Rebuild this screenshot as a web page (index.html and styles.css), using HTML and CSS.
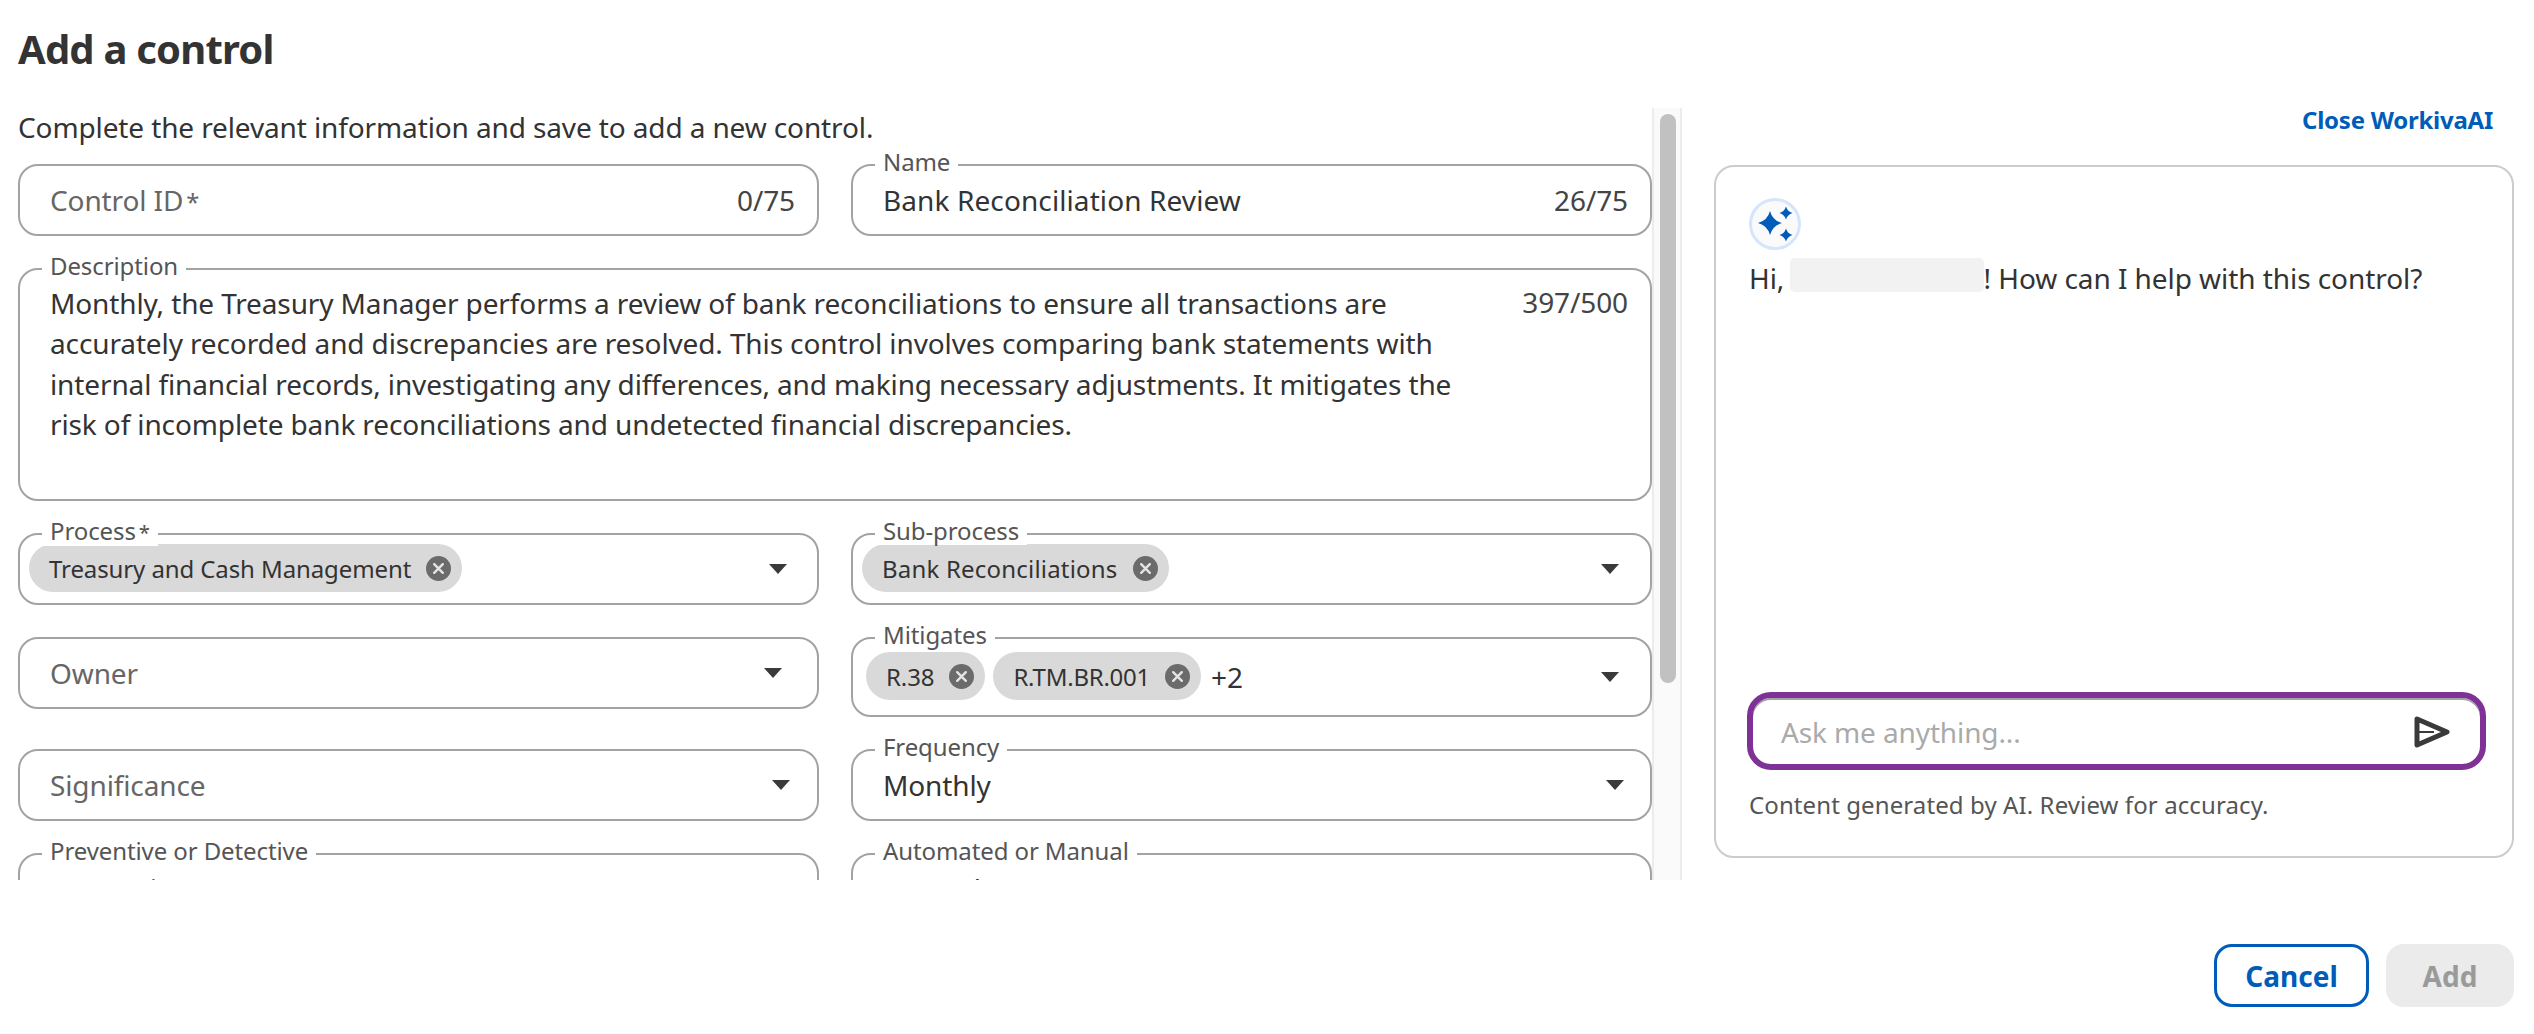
FILE: index.html
```html
<!DOCTYPE html>
<html lang="en">
<head>
<meta charset="utf-8">
<title>Add a control</title>
<link rel="stylesheet" href="styles.css">
</head>
<body>
<header class="page-head"><h1 class="title">Add a control</h1></header>
<main class="content">
  <section class="form-pane">
    <div class="form-scroll">
      <p class="intro">Complete the relevant information and save to add a new control.</p>
      <div class="form-grid">
        <div class="field field-text">
          <span class="placeholder">Control ID<span class="req">*</span></span>
          <span class="count">0/75</span>
        </div>
        <div class="field field-text">
          <span class="legend">Name</span>
          <span class="value value-name">Bank Reconciliation Review</span>
          <span class="count">26/75</span>
        </div>
        <div class="field field-desc">
          <span class="legend">Description</span>
          <div class="value desc-text">Monthly, the Treasury Manager performs a review of bank reconciliations to ensure all transactions are<br>accurately recorded and discrepancies are resolved. This control involves comparing bank statements with<br>internal financial records, investigating any differences, and making necessary adjustments. It mitigates the<br>risk of incomplete bank reconciliations and undetected financial discrepancies.</div>
          <span class="count">397/500</span>
        </div>
        <div class="field field-chips">
          <span class="legend">Process<span class="req">*</span></span>
          <span class="chip chip-process">Treasury and Cash Management
            <svg class="chip-x" viewBox="0 0 26 26"><circle cx="13" cy="13" r="13"/><path d="M8.500 8.500l9 9M17.500 8.500l-9 9"/></svg></span>
          <span class="caret caret-mid"></span>
        </div>
        <div class="field field-chips">
          <span class="legend">Sub-process</span>
          <span class="chip chip-wide">Bank Reconciliations
            <svg class="chip-x" viewBox="0 0 26 26"><circle cx="13" cy="13" r="13"/><path d="M8.500 8.500l9 9M17.500 8.500l-9 9"/></svg></span>
          <span class="caret caret-wide"></span>
        </div>
        <div class="field field-select">
          <span class="placeholder">Owner</span>
          <span class="caret caret-far"></span>
        </div>
        <div class="field field-chips field-tall">
          <span class="legend">Mitigates</span>
          <span class="chip chip-first">R.38
            <svg class="chip-x" viewBox="0 0 26 26"><circle cx="13" cy="13" r="13"/><path d="M8.500 8.500l9 9M17.500 8.500l-9 9"/></svg></span>
          <span class="chip chip-tight">R.TM.BR.001
            <svg class="chip-x" viewBox="0 0 26 26"><circle cx="13" cy="13" r="13"/><path d="M8.500 8.500l9 9M17.500 8.500l-9 9"/></svg></span>
          <span class="more">+2</span>
          <span class="caret caret-wide"></span>
        </div>
        <div class="field field-select">
          <span class="placeholder">Significance</span>
          <span class="caret caret-near"></span>
        </div>
        <div class="field field-select">
          <span class="legend">Frequency</span>
          <span class="value">Monthly</span>
          <span class="caret caret-freq"></span>
        </div>
        <div class="field field-select">
          <span class="legend">Preventive or Detective</span>
          <span class="value">Preventive</span>
          <span class="caret caret-near"></span>
        </div>
        <div class="field field-select">
          <span class="legend">Automated or Manual</span>
          <span class="value">Manual</span>
          <span class="caret caret-freq"></span>
        </div>
      </div>
    </div>
    <div class="scrollbar"><div class="thumb"></div></div>
  </section>
  <aside class="ai-pane">
    <a class="close-link">Close WorkivaAI</a>
    <div class="ai-card">
      <div class="ai-icon">
        <svg viewBox="0 0 52 52" width="52" height="52"><path class="spark" d="M21 13Q23.500 22.500 33 25 23.500 27.500 21 37 18.500 27.500 9 25 18.500 22.500 21 13Z"/><path class="spark" d="M37 8.500Q38.500 13.500 43.500 15 38.500 16.500 37 21.500 35.500 16.500 30.500 15 35.500 13.500 37 8.500Z"/><path class="spark" d="M37 30.500Q38.500 35.500 43.500 37 38.500 38.500 37 43.500 35.500 38.500 30.500 37 35.500 35.500 37 30.500Z"/></svg>
      </div>
      <p class="greeting">Hi, <span class="redacted"></span>! How can I help with this control?</p>
      <div class="ask-box">
        <span class="ask-placeholder">Ask me anything...</span>
        <svg class="send" viewBox="0 0 36 32" width="36" height="32"><path d="M3 3L33 16 3 29Z"/><path class="send-line" d="M3 16H20"/></svg>
      </div>
      <p class="disclaimer">Content generated by AI. Review for accuracy.</p>
    </div>
  </aside>
</main>
<footer class="actions">
  <button class="btn btn-cancel">Cancel</button>
  <button class="btn btn-add">Add</button>
</footer>
</body>
</html>
```
FILE: styles.css
```css
* { box-sizing: border-box; }
html, body { margin: 0; padding: 0; }
body {
  width: 2534px;
  height: 1034px;
  overflow: hidden;
  background: #fff;
  color: #333;
  font-family: "Noto Sans", "Liberation Sans", sans-serif;
  display: flex;
  flex-direction: column;
}
.page-head { height: 108px; padding: 24px 0 0 18px; flex: none; }
.title { margin: 0; font-size: 40px; line-height: 50px; font-weight: 700; color: #333; letter-spacing: -0.8px; }
.content { display: flex; height: 772px; flex: none; }
.form-pane { display: flex; width: 1682px; flex: none; }
.form-scroll { width: 1652px; height: 772px; overflow: hidden; padding: 0 0 0 18px; }
.intro { margin: -1px 0 17px; font-size: 28px; line-height: 40px; letter-spacing: -0.12px; color: #333; }
.form-grid { display: grid; grid-template-columns: 801px 801px; column-gap: 32px; row-gap: 32px; align-items: start; }
.field {
  position: relative;
  display: flex;
  align-items: center;
  height: 72px;
  border: 2px solid #a3a3a3;
  border-radius: 20px;
  background: #fff;
  padding: 0 22px 0 30px;
  font-size: 28px;
  letter-spacing: -0.12px;
}
.field-desc { grid-column: 1 / span 2; height: 233px; align-items: flex-start; padding-top: 13px; }
.field-chips { padding: 0 0 0 9px; gap: 8px; }
.field-tall { height: 80px; padding-left: 13px; }
.field-select { padding-right: 0; }
.legend {
  position: absolute;
  top: -18px;
  left: 22px;
  padding: 0 8px;
  background: #fff;
  font-size: 24px;
  line-height: 28px;
  color: #555;
  letter-spacing: -0.1px;
}
.placeholder { color: #666; font-size: 28px; }
.req { margin-left: 3px; font-size: 0.85em; }
.value { color: #333; white-space: nowrap; }
.value-name { letter-spacing: 0.1px; }
.count { margin-left: auto; color: #444; }
.desc-text { line-height: 40.3px; }
.chip {
  display: inline-flex;
  align-items: center;
  gap: 15px;
  height: 48px;
  margin-top: -2px;
  padding: 0 11px 0 20px;
  border-radius: 24px;
  background: #d9d9d9;
  font-size: 24px;
  letter-spacing: -0.1px;
  color: #333;
  white-space: nowrap;
}
.chip-wide { letter-spacing: 0.2px; }
.chip-tight { letter-spacing: -0.25px; }
.chip-x { width: 25px; height: 25px; flex: none; }
.chip-x circle { fill: #6b6b6b; }
.chip-x path { stroke: #e4e4e4; stroke-width: 2.500; fill: none; stroke-linecap: round; }
.more { margin-left: 2px; font-size: 28px; color: #333; }
.caret {
  margin-left: auto;
  width: 0;
  height: 0;
  border-left: 9px solid transparent;
  border-right: 9px solid transparent;
  border-top: 10px solid #3a3a3a;
}
.caret-mid { margin-right: 30px; }
.caret-far { margin-right: 35px; }
.caret-near { margin-right: 27px; }
.caret-wide { margin-right: 31px; }
.caret-freq { margin-right: 26px; }
.scrollbar {
  width: 30px;
  height: 772px;
  padding: 6px 6px 0;
  background: #fafafa;
  border-left: 2px solid #ececec;
  border-right: 2px solid #ececec;
}
.thumb { width: 16px; height: 569px; border-radius: 8px; background: #c1c1c1; }
.ai-pane { flex: 1; display: flex; flex-direction: column; padding: 0 20px 0 32px; }
.close-link {
  align-self: flex-end;
  margin: 0 21px 33px 0;
  font-size: 24px;
  line-height: 24px;
  font-weight: 700;
  letter-spacing: -0.25px;
  color: #005cb9;
}
.ai-card {
  display: flex;
  flex-direction: column;
  height: 693px;
  border: 2px solid #cccccc;
  border-radius: 20px;
  padding: 31px 26px 0 33px;
}
.ai-icon {
  width: 52px;
  height: 52px;
  flex: none;
  border-radius: 50%;
  border: 3px solid #d5e5fb;
  background: #fafafa;
  display: flex;
  align-items: center;
  justify-content: center;
}
.ai-icon svg { flex: none; }
.spark { fill: #005cb9; }
.greeting { margin: 11px 0 0; display: flex; align-items: center; height: 34px; font-size: 28px; color: #333; white-space: pre; letter-spacing: -0.06px; }
.redacted { display: block; width: 194px; height: 34px; margin: -6px 0 0 -2px; border-radius: 5px; background: #f2f2f2; }
.ask-box {
  margin-top: auto;
  display: flex;
  align-items: center;
  justify-content: space-between;
  height: 78px;
  margin-left: -2px;
  width: 739px;
  padding: 2px 30px 0 28px;
  border: 6px solid #7f3296;
  border-radius: 24px;
  box-shadow: inset 0 2px 0 #a3a3a3;
}
.ask-placeholder { font-size: 28px; color: #aaa; letter-spacing: -0.12px; }
.send path { fill: none; stroke: #3a3a3a; stroke-width: 5; stroke-linejoin: round; }
.send .send-line { stroke-width: 2; }
.disclaimer { margin: 20px 0 0; height: 66px; font-size: 24px; line-height: 30px; color: #555; letter-spacing: 0.1px; }
.actions { display: flex; justify-content: flex-end; gap: 17px; padding: 64px 20px 0 0; }
.btn {
  height: 63px;
  border-radius: 18px;
  font-family: inherit;
  font-size: 28px;
  font-weight: 700;
  padding: 0;
}
.btn-cancel { width: 155px; background: #fff; border: 3px solid #005cb9; color: #005cb9; }
.btn-add { width: 128px; background: #ebebeb; border: 0; color: #9a9a9a; }
```
